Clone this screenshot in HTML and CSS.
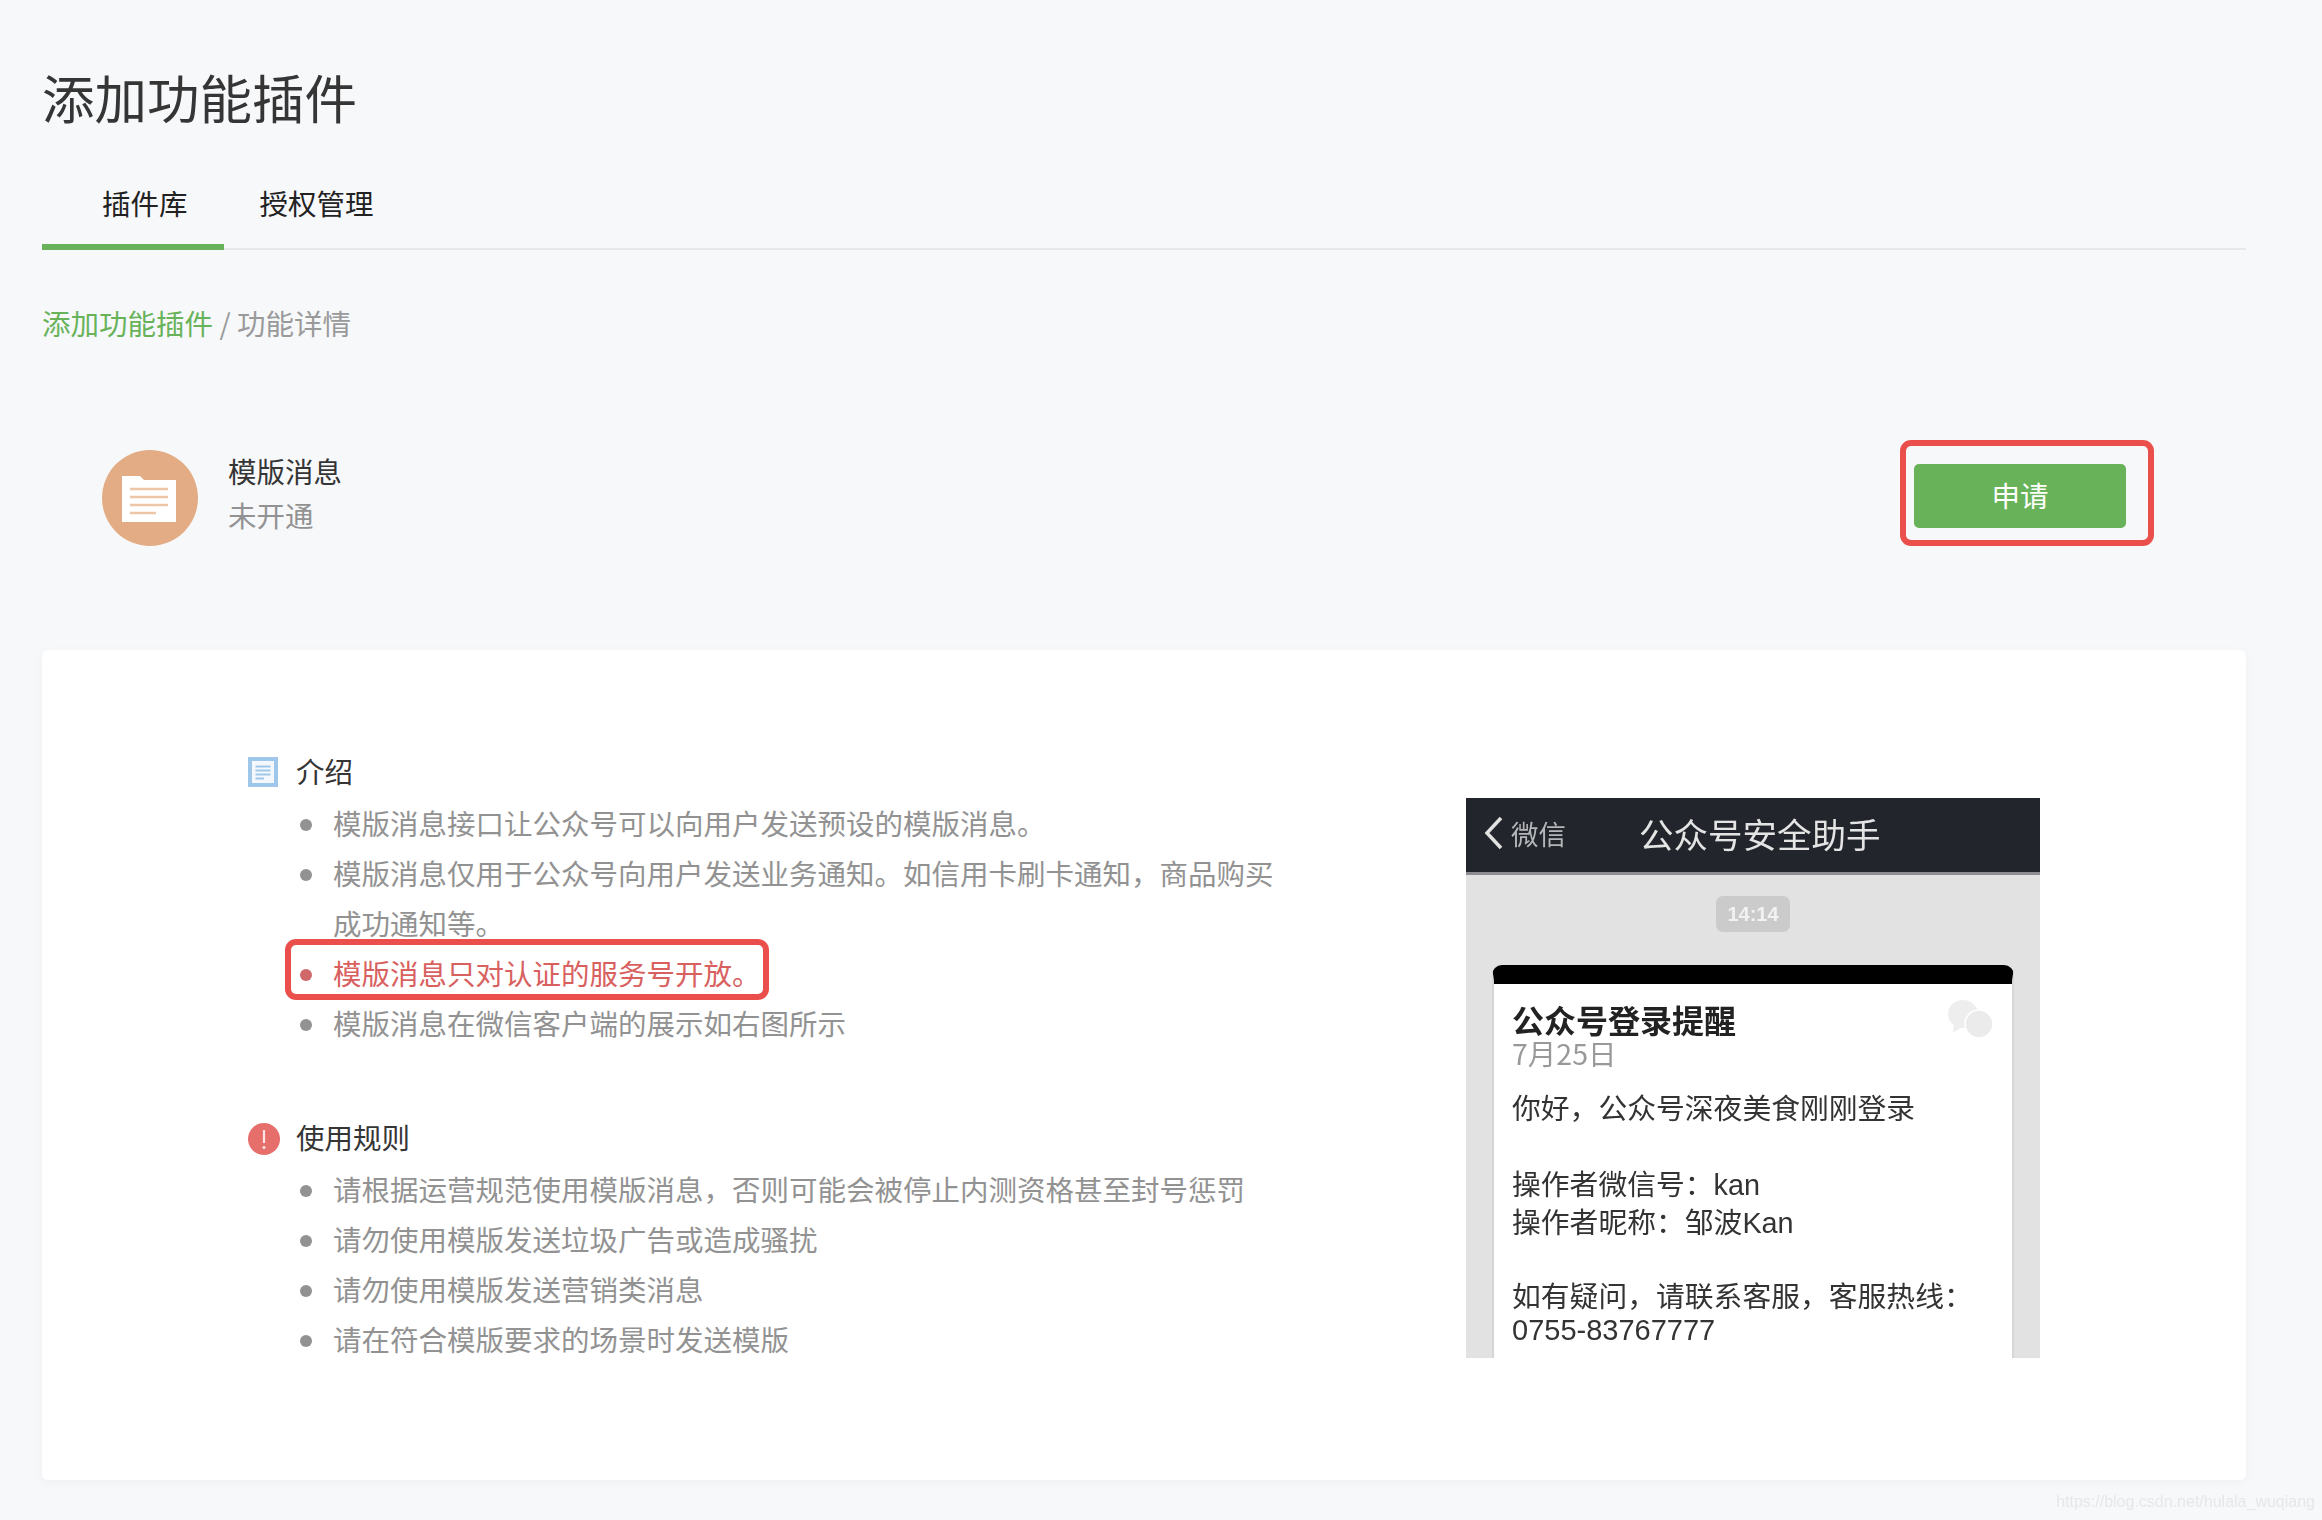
FILE: index.html
```html
<!DOCTYPE html>
<html lang="zh-CN">
<head>
<meta charset="utf-8">
<title>添加功能插件</title>
<link rel="stylesheet" href="styles.css">
</head>
<body>
<main class="page">
  <h1 class="title">添加功能插件</h1>
  <nav class="tabs">
    <a class="tab tab-active">插件库</a>
    <a class="tab">授权管理</a>
  </nav>
  <div class="crumb"><a class="crumb-link">添加功能插件</a> / 功能详情</div>

  <section class="plugin">
    <svg class="plugin-icon" viewBox="0 0 96 96" aria-hidden="true">
      <circle cx="48" cy="48" r="48" fill="#e3ac84"/>
      <path d="M20 26H38L42 30H74V72H20Z" fill="#fff"/>
      <path d="M28 39H66M28 47H66M28 55H66M28 63H54" stroke="#edc5a7" stroke-width="2.6" fill="none"/>
    </svg>
    <div class="plugin-text">
      <div class="plugin-name">模版消息</div>
      <div class="plugin-state">未开通</div>
    </div>
    <div class="apply-wrap">
      <button class="apply">申请</button>
      <span class="mark mark-apply"></span>
    </div>
  </section>

  <section class="card">
    <div class="info">
      <h2 class="head">
        <svg class="head-icon" viewBox="0 0 30 30" aria-hidden="true">
          <rect x="2" y="2" width="26" height="26" fill="#f4f8fc" stroke="#9fc7e9" stroke-width="4"/>
          <path d="M7.500 9.500H22.500M7.500 13.500H22.500M7.500 17.500H22.500M7.500 21.500H16" stroke="#9fc7e9" stroke-width="2.200" fill="none"/>
        </svg>
        <span>介绍</span>
      </h2>
      <ul class="list">
        <li class="item">模版消息接口让公众号可以向用户发送预设的模版消息。</li>
        <li class="item">模版消息仅用于公众号向用户发送业务通知。如信用卡刷卡通知&#xFF0C;商品购买成功通知等。</li>
        <li class="item item-red">模版消息只对认证的服务号开放。<span class="mark mark-rule"></span></li>
        <li class="item">模版消息在微信客户端的展示如右图所示</li>
      </ul>
      <h2 class="head head-rules">
        <svg class="head-icon" viewBox="0 0 32 32" aria-hidden="true">
          <circle cx="16" cy="16" r="16" fill="#e66f6c"/>
          <path d="M16 7V20" stroke="#fbe6e5" stroke-width="2.2"/>
          <circle cx="16" cy="24.500" r="1.500" fill="#fbe6e5"/>
        </svg>
        <span>使用规则</span>
      </h2>
      <ul class="list">
        <li class="item">请根据运营规范使用模版消息&#xFF0C;否则可能会被停止内测资格甚至封号惩罚</li>
        <li class="item">请勿使用模版发送垃圾广告或造成骚扰</li>
        <li class="item">请勿使用模版发送营销类消息</li>
        <li class="item">请在符合模版要求的场景时发送模版</li>
      </ul>
    </div>

    <div class="phone">
      <header class="phone-bar">
        <svg class="phone-back" viewBox="0 0 20 34" aria-hidden="true"><path d="M17 2L3 17L17 32" fill="none" stroke="#e2e2e2" stroke-width="3.500"/></svg>
        <span class="phone-back-text">微信</span>
        <span class="phone-title">公众号安全助手</span>
      </header>
      <div class="phone-body">
        <div class="phone-time">14:14</div>
        <article class="msg">
          <svg class="msg-logo" viewBox="0 0 46 38" aria-hidden="true">
            <ellipse cx="15" cy="14" rx="15" ry="14" fill="#eeeeee"/>
            <path d="M6 24L5 33L14 27Z" fill="#eeeeee"/>
            <circle cx="31" cy="24" r="14" fill="#ebebeb" stroke="#fff" stroke-width="1.500"/>
          </svg>
          <div class="msg-title">公众号登录提醒</div>
          <div class="msg-date">7月25日</div>
          <p class="msg-line msg-hello">你好&#xFF0C;公众号深夜美食刚刚登录</p>
          <p class="msg-line msg-op">操作者微信号&#xFF1A;kan</p>
          <p class="msg-line">操作者昵称&#xFF1A;邹波Kan</p>
          <p class="msg-line msg-help">如有疑问&#xFF0C;请联系客服&#xFF0C;客服热线&#xFF1A;</p>
          <p class="msg-line msg-tel">0755-83767777</p>
        </article>
      </div>
    </div>
  </section>
</main>
<div class="watermark">https://blog.csdn.net/hulala_wuqiang</div>
</body>
</html>
```
FILE: styles.css
```css
* { box-sizing: border-box; }
html, body { margin: 0; padding: 0; }
body {
  position: relative;
  width: 2322px;
  height: 1520px;
  overflow: hidden;
  background: #f7f8fa;
  color: #353535;
  font-family: "Noto Sans CJK SC", "Liberation Sans", sans-serif;
}
.page { padding: 60px 76px 0 42px; }
.title {
  margin: 0;
  font-size: 52.5px;
  font-weight: 400;
  line-height: 72px;
  color: #353535;
}
.tabs {
  display: flex;
  height: 80px;
  margin-top: 38px;
  border-bottom: 2px solid #e7e7eb;
}
.tab {
  height: 80px;
  padding: 0 36px;
  font-size: 28.5px;
  line-height: 66px;
  color: #222;
}
.tab-active {
  padding-left: 60px;
  border-bottom: 6px solid #68b35a;
}
.crumb {
  margin-top: 53px;
  font-size: 28.5px;
  line-height: 40px;
  color: #9a9a9a;
}
.crumb-link { color: #68b35a; }
.plugin {
  display: flex;
  align-items: flex-start;
  margin-top: 107px;
  padding: 0 120px 0 60px;
}
.plugin-icon { width: 96px; height: 96px; flex: none; }
.plugin-text { flex: 1; margin: -1px 0 0 30px; font-size: 28.5px; line-height: 44px; }
.plugin-name { color: #353535; }
.plugin-state { color: #929292; }
.apply-wrap { position: relative; margin-top: 14px; }
.apply {
  display: block;
  width: 212px;
  height: 64px;
  padding: 0 0 3px;
  border: 0;
  border-radius: 5px;
  background: #68b35a;
  color: #fff;
  font: inherit;
  font-size: 28.5px;
}
.mark {
  position: absolute;
  border: 6px solid #ea4f4c;
  border-radius: 11px;
  pointer-events: none;
}
.mark-apply { left: -14px; top: -24px; width: 254px; height: 106px; }
.mark-rule { left: -48px; top: -9px; width: 484px; height: 61px; }
.card {
  display: flex;
  justify-content: space-between;
  align-items: flex-start;
  height: 830px;
  margin-top: 104px;
  padding: 96px 206px 0;
  background: #fff;
  border-radius: 6px;
  box-shadow: 0 2px 8px rgba(150, 150, 160, 0.08);
}
.info { width: 1050px; }
.head {
  display: flex;
  align-items: center;
  margin: 0;
  font-size: 28.5px;
  font-weight: 400;
  line-height: 50px;
  color: #353535;
}
.head span { margin-left: 18px; }
.head-icon { width: 30px; height: 30px; flex: none; margin-top: 2px; }
.head-rules { margin-top: 64px; }
.head-rules .head-icon { width: 32px; height: 32px; margin-top: 4px; }
.head-rules span { margin-left: 16px; }
.list { margin: 2px 0 0; padding: 0 0 0 85px; list-style: none; }
.item {
  position: relative;
  width: 945px;
  font-size: 28.5px;
  line-height: 50px;
  color: #929292;
}
.item::before {
  content: "";
  position: absolute;
  left: -33px;
  top: 21px;
  width: 12px;
  height: 12px;
  border-radius: 50%;
  background: #929292;
}
.item-red { color: #d8605e; }
.item-red::before { background: #d0686a; }
.phone {
  width: 574px;
  height: 560px;
  margin-top: 52px;
  background: #e2e2e2;
  overflow: hidden;
  filter: blur(0.5px);
}
.phone-bar {
  display: flex;
  align-items: center;
  height: 77px;
  padding: 0 0 4px 18px;
  background: #22262c;
  border-bottom: 3px solid #8b8d90;
  color: #e2e2e2;
}
.phone-back { width: 20px; height: 34px; flex: none; }
.phone-back-text { margin-left: 7px; font-size: 27.5px; color: #b5b6b8; }
.phone-title { margin-left: 73px; font-size: 34.5px; color: #e4e4e4; }
.phone-body { display: flex; flex-direction: column; align-items: center; }
.phone-time {
  width: 74px;
  height: 36px;
  margin-top: 21px;
  border-radius: 7px;
  background: #cbcbcb;
  color: #f2f2f2;
  font-family: "Liberation Sans", sans-serif;
  font-size: 20px;
  font-weight: 700;
  line-height: 36px;
  text-align: center;
}
.msg {
  position: relative;
  width: 522px;
  height: 393px;
  margin-top: 33px;
  padding: 16px 19px 0 18px;
  background: #fff;
  border: solid #d6d6d6;
  border-width: 0 2px;
  border-top: 19px solid #000;
  border-radius: 10px 10px 0 0;
  color: #333;
}
.msg-logo { position: absolute; top: 16px; right: 18px; width: 46px; height: 38px; }
.msg-title { font-size: 32px; font-weight: 700; line-height: 38px; color: #222; white-space: nowrap; }
.msg-date { font-size: 28.5px; line-height: 28px; color: #999; margin-top: 1px; white-space: nowrap; }
.msg-line {
  margin: 0;
  font-family: "Liberation Sans", "Noto Sans CJK SC", sans-serif;
  font-size: 28.8px;
  line-height: 38px;
  white-space: nowrap;
}
.msg-hello { margin-top: 23px; }
.msg-op { margin-top: 38px; }
.msg-help { margin-top: 36px; }
.msg-tel { margin-top: -5px; font-size: 29px; }
.watermark {
  position: absolute;
  right: 7px;
  bottom: 7px;
  font-family: "Liberation Sans", sans-serif;
  font-size: 16px;
  line-height: 22px;
  color: #e6e7ea;
  filter: blur(0.4px);
}
```
